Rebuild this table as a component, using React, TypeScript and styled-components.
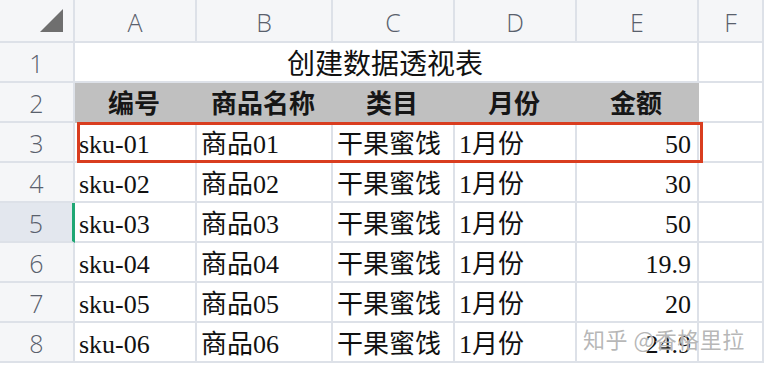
import React from "react";
import styled, { createGlobalStyle, css } from "styled-components";

const Global = createGlobalStyle`
  html, body { margin: 0; padding: 0; background: #ffffff; }
  body { width: 764px; height: 370px; overflow: hidden; }
`;

const LINE = "#dde1e8";

const Sheet = styled.div`
  position: relative;
  display: grid;
  grid-template-columns: 75px 122px 136px 122px 122px 122px 1fr;
  grid-template-rows: 43px repeat(8, 40px);
  width: 764px;
  height: 370px;
  overflow: hidden;
  background: #fff;
`;

const Corner = styled.div`
  display: flex;
  align-items: flex-end;
  justify-content: flex-end;
  padding: 0 10px 9px 0;
  background: #f5f6f8;
  border-right: 2px solid ${LINE};
  border-bottom: 2px solid ${LINE};
  box-sizing: border-box;
`;

const ColHead = styled.div`
  display: flex;
  align-items: center;
  justify-content: center;
  background: #f5f6f8;
  border-right: 2px solid ${LINE};
  border-bottom: 2px solid ${LINE};
  box-sizing: border-box;
  font-family: "Open Sans", "Liberation Sans", sans-serif;
  font-weight: 300;
  font-size: 25px;
  color: #59606c;
  padding-top: 2px;
`;

const RowHead = styled.div<{ $active?: boolean }>`
  display: flex;
  align-items: center;
  justify-content: center;
  background: ${(p) => (p.$active ? "#e3e7ee" : "#f5f6f8")};
  border-right: 2px solid ${LINE};
  border-bottom: 2px solid ${LINE};
  box-sizing: border-box;
  font-family: "Open Sans", "Liberation Sans", sans-serif;
  font-weight: 300;
  font-size: 25px;
  color: #59606c;
  padding-top: 2px;
  ${(p) =>
    p.$active &&
    css`
      border-right: 3px solid #1fa774;
    `}
`;

const Cell = styled.div<{ $align?: "left" | "right" | "center"; $span?: number; $head?: boolean; $title?: boolean }>`
  display: block;
  grid-column: span ${(p) => p.$span ?? 1};
  text-align: ${(p) => p.$align ?? "left"};
  padding: 4px 6px 0 4px;
  border-right: 2px solid ${LINE};
  border-bottom: 2px solid ${LINE};
  box-sizing: border-box;
  font-family: "Liberation Serif", "Noto Sans CJK SC", serif;
  font-size: ${(p) => (p.$title ? "28px" : "26px")};
  line-height: 35px;
  color: #111;
  white-space: nowrap;
  overflow: visible;
  ${(p) =>
    p.$head &&
    css`
      background: #c0c0c0;
      border-right-color: #c0c0c0;
      border-bottom-color: #c0c0c0;
      font-weight: 700;
      color: #161616;
    `}
`;

const Selection = styled.div`
  position: absolute;
  left: 77px;
  top: 122px;
  width: 626px;
  height: 41px;
  border: 3px solid #d93d1f;
  box-sizing: border-box;
  pointer-events: none;
`;

const Watermark = styled.div`
  position: absolute;
  left: 583px;
  top: 322px;
  font-family: "Noto Sans CJK SC", "Liberation Sans", sans-serif;
  font-size: 22px;
  letter-spacing: 0.5px;
  color: rgba(160, 160, 160, 0.75);
  text-shadow: 0 0 1px #fff;
  white-space: nowrap;
  pointer-events: none;
`;

const cols = ["A", "B", "C", "D", "E", "F"];
const headers = ["编号", "商品名称", "类目", "月份", "金额"];
const rows: [string, string, string, string, string][] = [
  ["sku-01", "商品01", "干果蜜饯", "1月份", "50"],
  ["sku-02", "商品02", "干果蜜饯", "1月份", "30"],
  ["sku-03", "商品03", "干果蜜饯", "1月份", "50"],
  ["sku-04", "商品04", "干果蜜饯", "1月份", "19.9"],
  ["sku-05", "商品05", "干果蜜饯", "1月份", "20"],
  ["sku-06", "商品06", "干果蜜饯", "1月份", "24.9"],
];

export default function App() {
  return (
    <>
      <Global />
      <Sheet>
        <Corner>
          <svg width="23" height="23" viewBox="0 0 23 23">
            <polygon points="23,0 23,23 0,23" fill="#6f6f6f" />
          </svg>
        </Corner>
        {cols.map((c) => (
          <ColHead key={c}>{c}</ColHead>
        ))}

        <RowHead>1</RowHead>
        <Cell $span={5} $align="center" $title>创建数据透视表</Cell>
        <Cell />

        <RowHead>2</RowHead>
        {headers.map((h) => (
          <Cell key={h} $head $align="center">{h}</Cell>
        ))}
        <Cell />

        {rows.map((r, i) => (
          <React.Fragment key={r[0]}>
            <RowHead $active={i === 2}>{i + 3}</RowHead>
            <Cell>{r[0]}</Cell>
            <Cell>{r[1]}</Cell>
            <Cell>{r[2]}</Cell>
            <Cell>{r[3]}</Cell>
            <Cell $align="right">{r[4]}</Cell>
            <Cell />
          </React.Fragment>
        ))}

        <Selection />
        <Watermark>知乎 @香格里拉</Watermark>
      </Sheet>
    </>
  );
}
